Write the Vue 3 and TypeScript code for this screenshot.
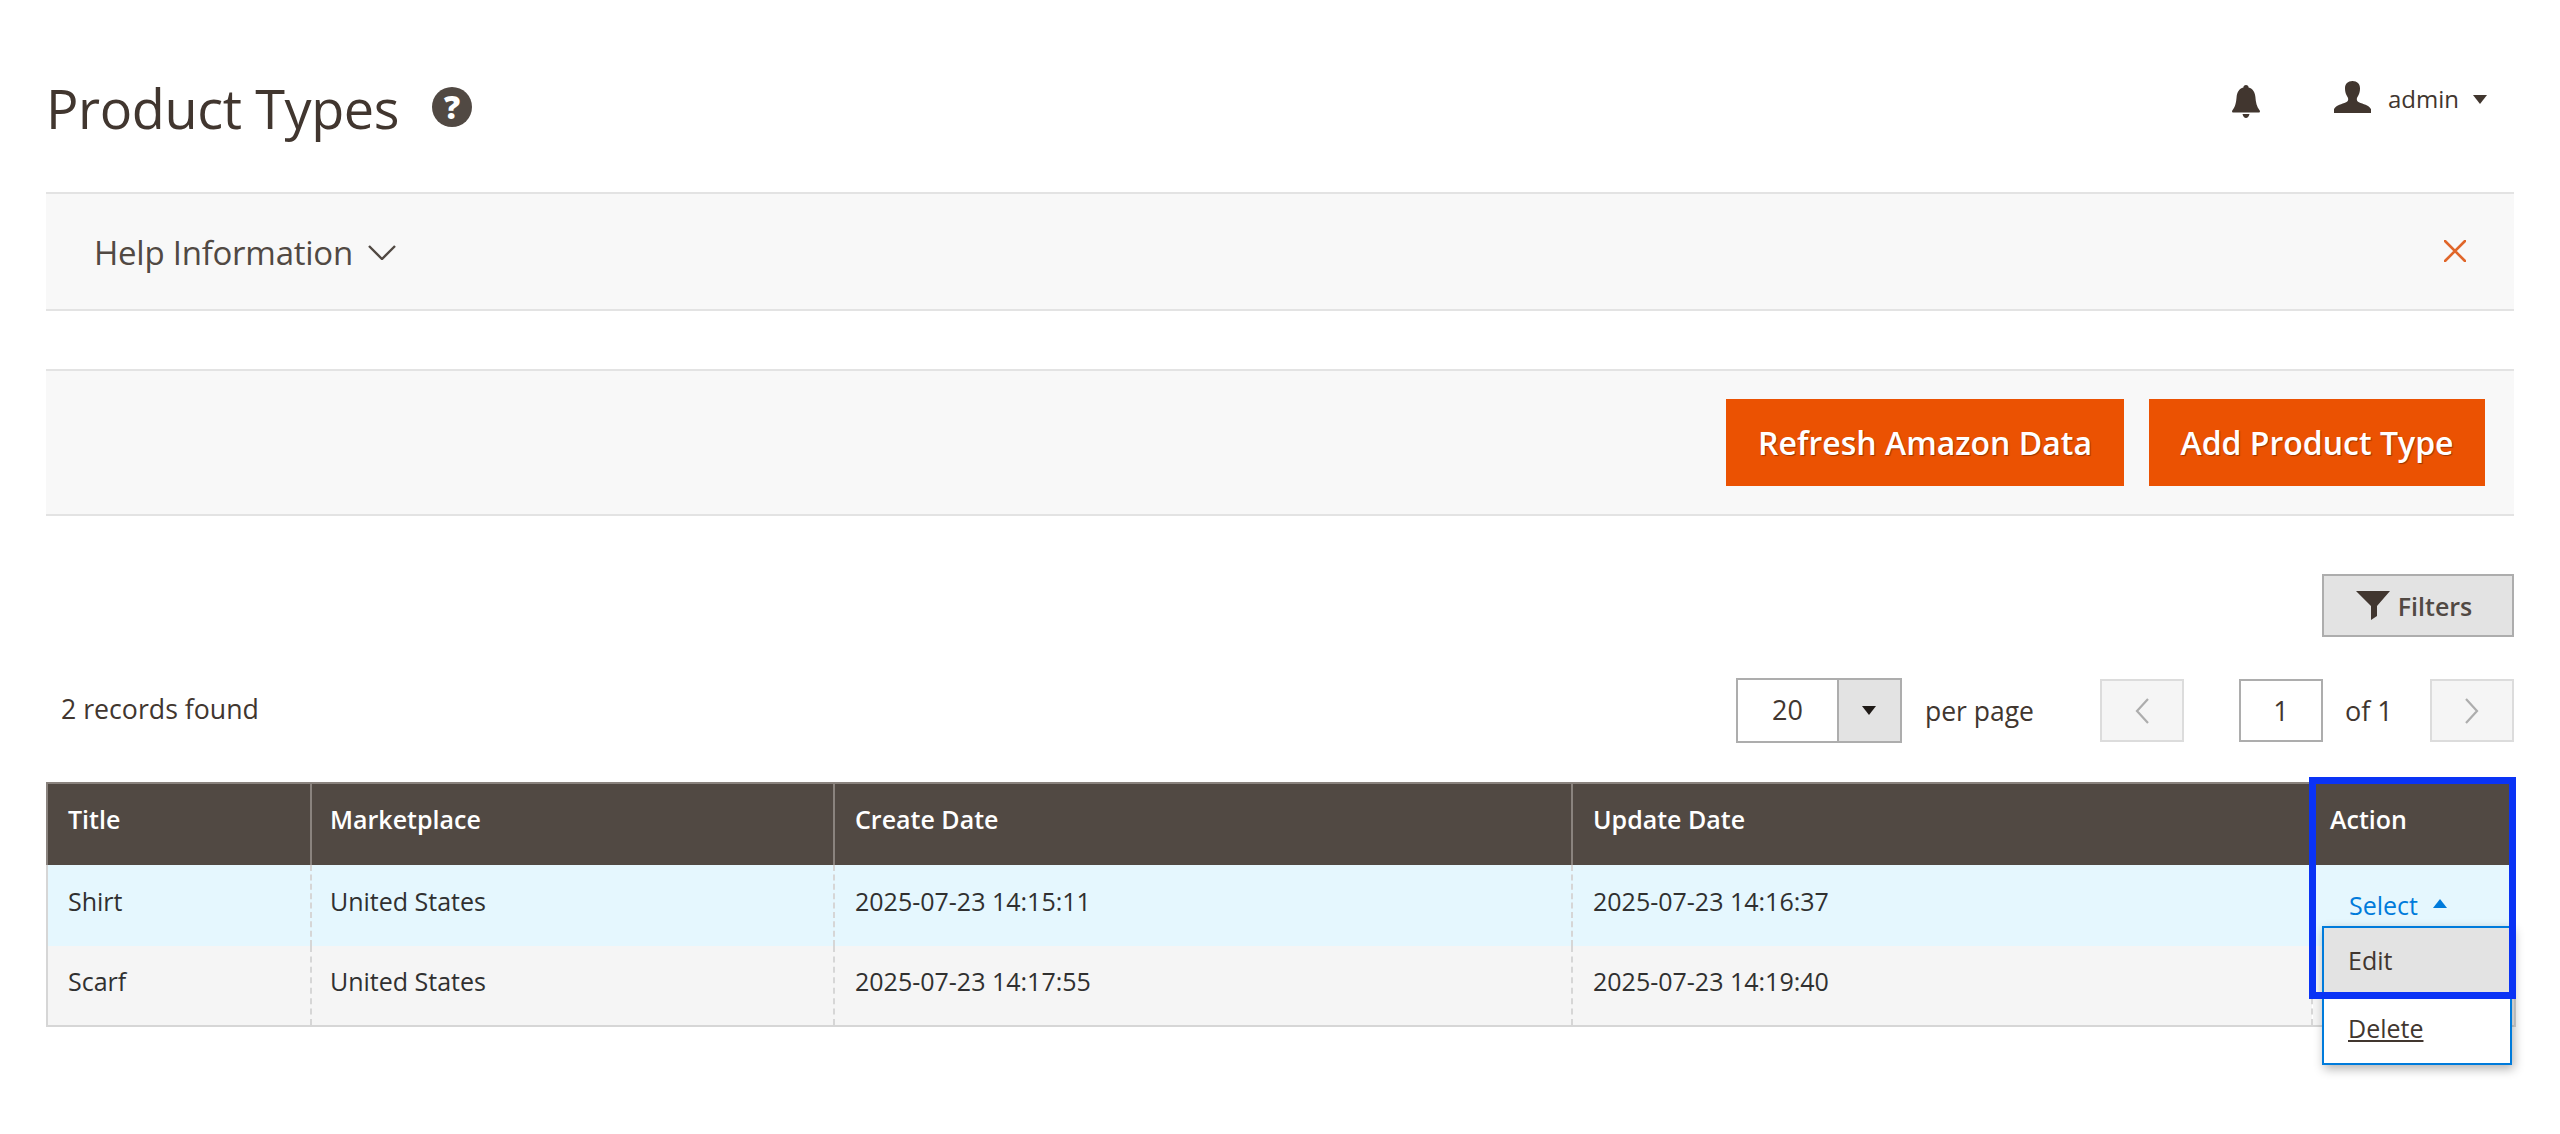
<script setup lang="ts">
interface Row { title: string; market: string; created: string; updated: string; active: boolean }
const rows: Row[] = [
  { title: 'Shirt', market: 'United States', created: '2025-07-23 14:15:11', updated: '2025-07-23 14:16:37', active: true },
  { title: 'Scarf', market: 'United States', created: '2025-07-23 14:17:55', updated: '2025-07-23 14:19:40', active: false },
]
</script>

<template>
  <div class="page">
    <header class="head">
      <div class="title-wrap">
        <h1 class="title">Product Types</h1>
        <span class="help-dot">?</span>
      </div>
      <div class="user-area">
        <svg class="bell" viewBox="0 0 28 33" width="28" height="33">
          <path fill="#41362f" d="M14 0c1.6 0 2.6 1 2.6 2.4C21 3.6 23 7 23.4 12c.4 5 1.2 10 4.3 13.4.6.8.2 2.1-1 2.1H1.3c-1.2 0-1.6-1.3-1-2.1C3.4 22 4.2 17 4.6 12 5 7 7 3.600 11.400 2.400 11.400 1 12.400 0 14 0zM10.500 29h7c-.6 2.600-2 4-3.500 4s-2.900-1.400-3.500-4z"/>
        </svg>
        <svg class="user" viewBox="0 0 37 32" width="37" height="32">
          <path fill="#41362f" d="M18.500 0c4.600 0 7.500 2.800 7.500 7.400 0 2.700-.6 5.200-1.700 7.200-.7 1.300-1.500 2.300-1.500 3.600 0 1.800 1.200 2.800 3.800 3.700 4.500 1.600 9.300 3 10.400 6.300V32H0v-3.800c1.100-3.300 5.900-4.700 10.400-6.300 2.600-.9 3.800-1.900 3.800-3.700 0-1.300-.8-2.300-1.500-3.600C11.600 12.600 11 10.100 11 7.400 11 2.800 13.900 0 18.500 0z"/>
        </svg>
        <span class="admin">admin</span>
        <span class="admin-caret"></span>
      </div>
    </header>

    <section class="help-bar">
      <div class="help-label">
        <span>Help Information</span>
        <svg viewBox="0 0 28 15" width="28" height="15">
          <path d="M1 1l13 13L27 1" fill="none" stroke="#514943" stroke-width="2.400"/>
        </svg>
      </div>
      <svg class="close" viewBox="0 0 22 22" width="22" height="22">
        <path d="M1 1l20 20M21 1L1 21" fill="none" stroke="#e0662a" stroke-width="2.600" stroke-linecap="round"/>
      </svg>
    </section>

    <section class="toolbar">
      <button class="primary refresh">Refresh Amazon Data</button>
      <button class="primary add">Add Product Type</button>
    </section>

    <div class="filters-row">
      <button class="filters">
        <svg viewBox="0 0 34 29" width="34" height="29">
          <path fill="#41362f" d="M0 0h34L21 15v10l-6 4V15z"/>
        </svg>
        <span>Filters</span>
      </button>
    </div>

    <div class="pager-row">
      <span class="records">2 records found</span>
      <div class="pager">
        <div class="per-select">
          <span class="per-value">20</span>
          <span class="per-toggle"><i></i></span>
        </div>
        <span class="per-label">per page</span>
        <button class="nav prev">
          <svg viewBox="0 0 14 26" width="14" height="26"><path d="M13 1L2 13l11 12" fill="none" stroke="#adadad" stroke-width="2.200"/></svg>
        </button>
        <span class="page-input">1</span>
        <span class="of">of 1</span>
        <button class="nav next">
          <svg viewBox="0 0 14 26" width="14" height="26"><path d="M1 1l11 12L1 25" fill="none" stroke="#adadad" stroke-width="2.200"/></svg>
        </button>
      </div>
    </div>

    <div class="table-wrap">
      <table class="grid">
        <colgroup>
          <col class="c1" /><col class="c2" /><col class="c3" /><col class="c4" /><col class="c5" />
        </colgroup>
        <thead>
          <tr>
            <th>Title</th><th>Marketplace</th><th>Create Date</th><th>Update Date</th><th>Action</th>
          </tr>
        </thead>
        <tbody>
          <tr v-for="r in rows" :key="r.title" :class="{ active: r.active }">
            <td>{{ r.title }}</td>
            <td>{{ r.market }}</td>
            <td>{{ r.created }}</td>
            <td>{{ r.updated }}</td>
            <td class="action-cell">
              <span v-if="r.active" class="select-link">Select<i class="up-caret"></i></span>
            </td>
          </tr>
        </tbody>
      </table>

      <div class="menu">
        <div class="menu-item hover">Edit</div>
        <div class="menu-item"><span class="del">Delete</span></div>
      </div>
      <div class="highlight"></div>
    </div>
  </div>
</template>

<style>
html, body { margin: 0; background: #fff; }
</style>

<style scoped>
.page {
  width: 2560px;
  height: 1134px;
  box-sizing: border-box;
  padding: 0 46px;
  overflow: hidden;
  background: #fff;
  font-family: "Open Sans", "Liberation Sans", sans-serif;
  color: #41362f;
}
.head {
  height: 192px;
  box-sizing: border-box;
  display: flex;
  justify-content: space-between;
  align-items: flex-start;
}
.title-wrap {
  display: flex;
  align-items: flex-start;
  padding-top: 70px;
}
.title {
  margin: 0;
  font-size: 54px;
  line-height: 76px;
  font-weight: 400;
  letter-spacing: -0.4px;
  color: #41362f;
}
.help-dot {
  width: 40px;
  height: 40px;
  margin: 17px 0 0 33px;
  border-radius: 50%;
  background: #514943;
  color: #fff;
  font-size: 32px;
  font-weight: 800;
  line-height: 40px;
  text-align: center;
}
.user-area {
  display: flex;
  align-items: flex-start;
  padding: 81px 27px 0 0;
}
.bell { margin: 4px 74px 0 0; }
.admin {
  margin: 0 0 0 17px;
  font-size: 24px;
  line-height: 36px;
  color: #41362f;
}
.admin-caret {
  width: 0;
  height: 0;
  margin: 14px 0 0 14px;
  border-left: 7px solid transparent;
  border-right: 7px solid transparent;
  border-top: 9px solid #41362f;
}
.help-bar {
  height: 119px;
  box-sizing: border-box;
  padding: 0 48px 0 48px;
  display: flex;
  align-items: center;
  justify-content: space-between;
  background: #f8f8f8;
  border-top: 2px solid #e3e3e3;
  border-bottom: 2px solid #e3e3e3;
}
.help-label {
  display: flex;
  align-items: center;
  gap: 15px;
  margin-top: 2px;
  font-size: 33px;
  letter-spacing: -0.25px;
  color: #514943;
}
.close { margin-top: -2px; }
.toolbar {
  height: 147px;
  margin-top: 58px;
  box-sizing: border-box;
  padding: 28px 29px 0 0;
  display: flex;
  justify-content: flex-end;
  align-items: flex-start;
  gap: 25px;
  background: #f8f8f8;
  border-top: 2px solid #e3e3e3;
  border-bottom: 2px solid #e3e3e3;
}
.primary {
  height: 87px;
  padding: 0;
  border: 0;
  background: #eb5202;
  color: #fff;
  font-family: inherit;
  font-size: 32px;
  font-weight: 600;
  text-shadow: 1px 1px 1px rgba(0, 0, 0, 0.35);
}
.refresh { width: 398px; }
.add { width: 336px; }
.filters-row {
  margin-top: 58px;
  display: flex;
  justify-content: flex-end;
}
.filters {
  width: 192px;
  height: 63px;
  box-sizing: border-box;
  padding: 0 8px 0 0;
  display: flex;
  align-items: center;
  justify-content: center;
  gap: 8px;
  background: #e3e3e3;
  border: 2px solid #adadad;
  color: #514943;
  font-family: inherit;
  font-size: 25px;
  font-weight: 600;
}
.pager-row {
  margin-top: 41px;
  height: 65px;
  display: flex;
  justify-content: space-between;
  align-items: center;
}
.records {
  margin: -4px 0 0 15px;
  font-size: 26.7px;
  color: #41362f;
}
.pager {
  display: flex;
  align-items: center;
  font-size: 27px;
}
.per-select {
  width: 166px;
  height: 65px;
  box-sizing: border-box;
  display: flex;
  border: 2px solid #adadad;
  background: #fff;
}
.per-value {
  flex: 1;
  text-align: center;
  line-height: 60px;
  font-size: 27px;
}
.per-toggle {
  width: 61px;
  display: flex;
  align-items: center;
  justify-content: center;
  background: #e3e3e3;
  border-left: 2px solid #adadad;
}
.per-toggle i {
  width: 0;
  height: 0;
  border-left: 7px solid transparent;
  border-right: 7px solid transparent;
  border-top: 9px solid #1f1a17;
}
.per-label { margin: 0 66px 0 23px; font-size: 26.5px; }
.nav {
  width: 84px;
  height: 63px;
  padding: 0;
  box-sizing: border-box;
  display: flex;
  align-items: center;
  justify-content: center;
  background: #f5f5f5;
  border: 2px solid #dcdcdc;
}
.page-input {
  width: 84px;
  height: 63px;
  margin-left: 55px;
  box-sizing: border-box;
  border: 2px solid #adadad;
  text-align: center;
  line-height: 59px;
  font-size: 27px;
}
.of { width: 107px; box-sizing: border-box; padding-left: 22px; }
.table-wrap {
  position: relative;
  margin-top: 39px;
}
.grid {
  width: 2468px;
  table-layout: fixed;
  border-collapse: collapse;
  font-size: 25px;
}
.c1 { width: 264px; }
.c2 { width: 523px; }
.c3 { width: 738px; }
.c4 { width: 740px; }
.c5 { width: 203px; }
.grid th {
  height: 82px;
  padding: 0 19px 12px 20px;
  box-sizing: border-box;
  background: #514943;
  color: #fff;
  font-weight: 600;
  text-align: left;
  border: 2px solid #8a837e;
  border-bottom: 0;
}
.grid td {
  height: 81px;
  padding: 0 19px 10px 20px;
  box-sizing: border-box;
  background: #f5f5f5;
  color: #303030;
  border-left: 2px dashed #d6d6d6;
  border-right: 2px dashed #d6d6d6;
}
.grid th:nth-child(2), .grid td:nth-child(2) { padding-left: 18px; }
.grid th:last-child { padding-left: 17px; }
.grid td:last-child { padding-left: 18px; }
.grid tbody tr:last-child td { height: 80px; border-bottom: 2px solid #d6d6d6; }
.grid td:first-child { border-left: 2px solid #d6d6d6; }
.grid td:last-child { border-right: 2px solid #d6d6d6; }
.grid tr.active td { background: #e5f7fe; }
.action-cell { position: relative; }
.select-link {
  display: inline-flex;
  align-items: center;
  margin: 8px 0 0 18px;
  color: #007bdb;
}
.up-caret {
  width: 0;
  height: 0;
  margin: -2px 0 0 15px;
  border-left: 7px solid transparent;
  border-right: 7px solid transparent;
  border-bottom: 9px solid #007bdb;
}
.menu {
  position: absolute;
  left: 2276px;
  top: 144px;
  width: 190px;
  height: 139px;
  box-sizing: border-box;
  background: #fff;
  border: 2px solid #007bdb;
  box-shadow: 2px 4px 10px rgba(0, 0, 0, 0.3);
  font-size: 25px;
  color: #41362f;
}
.menu-item {
  height: 68px;
  padding-left: 24px;
  line-height: 65px;
}
.menu-item.hover { background: #e3e3e3; }
.del { text-decoration: underline; }
.highlight {
  position: absolute;
  left: 2263px;
  top: -5px;
  width: 207px;
  height: 222px;
  box-sizing: border-box;
  border: 7px solid #0a33f5;
  pointer-events: none;
}
</style>
